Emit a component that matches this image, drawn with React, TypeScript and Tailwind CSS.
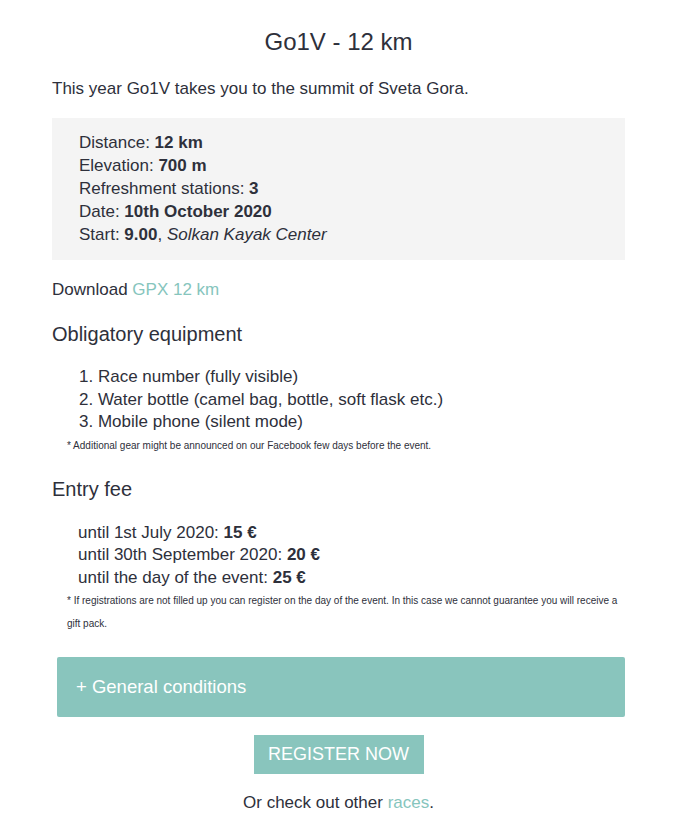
export default function App() {
  return (
    <div
      className="w-[680px] bg-white text-[#2e303b] pb-[8px]"
      style={{ fontFamily: '"Liberation Sans", Arial, sans-serif' }}
    >
      <div className="pl-[52px] pr-[55px]">
        <h1 className="pt-[28px] text-center text-[24px] leading-[28px]">Go1V - 12 km</h1>
        <p className="mt-[21px] text-[17px] leading-[24px]">
          This year Go1V takes you to the summit of Sveta Gora.
        </p>

        <div className="mt-[17px] bg-[#f4f4f4] pl-[27px] pt-[13px] pb-[14px] text-[17px] leading-[23px]">
          <div>
            Distance: <b>12 km</b>
          </div>
          <div>
            Elevation: <b>700 m</b>
          </div>
          <div>
            Refreshment stations: <b>3</b>
          </div>
          <div>
            Date: <b>10th October 2020</b>
          </div>
          <div>
            Start: <b>9.00</b>, <i>Solkan Kayak Center</i>
          </div>
        </div>

        <p className="mt-[18px] text-[17px] leading-[23px]">
          Download <a className="text-[#86c5bd]">GPX 12 km</a>
        </p>

        <h2 className="mt-[21px] text-[20px] leading-[24px]">Obligatory equipment</h2>
        <ol className="mt-[20px] pl-[27px] text-[17px] leading-[22.5px]">
          <li>1. Race number (fully visible)</li>
          <li>2. Water bottle (camel bag, bottle, soft flask etc.)</li>
          <li>3. Mobile phone (silent mode)</li>
        </ol>
        <p className="pl-[15px] text-[10px] leading-[23px]">
          * Additional gear might be announced on our Facebook few days before the event.
        </p>

        <h2 className="mt-[20px] text-[20px] leading-[24px]">Entry fee</h2>
        <div className="mt-[21px] pl-[26px] text-[17px] leading-[22.5px]">
          <div>
            until 1st July 2020: <b>15 €</b>
          </div>
          <div>
            until 30th September 2020: <b>20 €</b>
          </div>
          <div>
            until the day of the event: <b>25 €</b>
          </div>
        </div>
        <p className="pl-[15px] text-[10px] leading-[23px]">
          * If registrations are not filled up you can register on the day of the event. In this case we cannot
          guarantee you will receive a gift pack.
        </p>

        <div className="mt-[22px] ml-[5px] flex h-[60px] items-center rounded-[2px] bg-[#89c5bd] pl-[19px] text-[18.5px] text-white">
          + General conditions
        </div>

        <div className="mt-[18px] flex justify-center">
          <button className="h-[39px] w-[170px] bg-[#89c5bd] text-[18px] uppercase text-white">
            Register now
          </button>
        </div>

        <p className="mt-[17px] text-center text-[17px] leading-[23px]">
          Or check out other <a className="text-[#86c5bd]">races</a>.
        </p>
      </div>
    </div>
  );
}
